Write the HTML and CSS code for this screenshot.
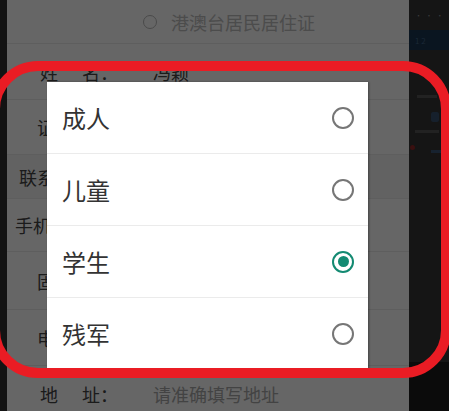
FILE: index.html
```html
<!DOCTYPE html>
<html lang="zh">
<head>
<meta charset="utf-8">
<title>乘客类型</title>
<link rel="stylesheet" href="styles.css">
</head>
<body>
<div class="screen">
  <div class="edge-left"></div>
  <div class="form">
    <div class="row idtype">
      <span class="small-radio"></span>
      <span class="idtype-text">港澳台居民居住证</span>
    </div>
    <div class="row r-name">
      <span class="label pad33">姓<i class="gap"></i>名：</span>
      <span class="value">冯颖</span>
    </div>
    <div class="row r-id">
      <span class="label pad30">证件号码：</span>
      <span class="placeholder">请输入证件号码</span>
    </div>
    <div class="section">联系人信息</div>
    <div class="row r-phone">
      <span class="label pad8">手机号码：</span>
      <span class="placeholder">请输入手机号码</span>
    </div>
    <div class="row r-tel">
      <span class="label pad30">固定电话：</span>
      <span class="placeholder">请输入固定电话</span>
    </div>
    <div class="row r-mail">
      <span class="label pad30">电子邮箱：</span>
      <span class="placeholder">请输入电子邮箱</span>
    </div>
    <div class="row r-addr">
      <span class="label pad33">地<i class="gap"></i>址：</span>
      <span class="placeholder">请准确填写地址</span>
    </div>
    <div class="dim"></div>
  </div>
  <div class="side">
    <div class="side-top"><span class="dots">• • •</span></div>
    <div class="side-band"><span class="band-text">1 2</span></div>
    <div class="side-body">
      <span class="side-line l1"></span>
      <span class="side-icon"></span>
      <span class="side-line l2"></span>
      <span class="side-dot"></span>
      <span class="side-line l3"></span>
    </div>
    <div class="side-bottom"></div>
  </div>
</div>

<div class="dialog">
  <div class="option"><span class="opt-text">成人</span><span class="radio"></span></div>
  <div class="option"><span class="opt-text">儿童</span><span class="radio"></span></div>
  <div class="option"><span class="opt-text">学生</span><span class="radio checked"></span></div>
  <div class="option"><span class="opt-text">残军</span><span class="radio"></span></div>
</div>

<div class="annotation"></div>
</body>
</html>
```

FILE: styles.css
```css
html, body {
  margin: 0;
  padding: 0;
}
body {
  width: 449px;
  height: 411px;
  overflow: hidden;
  background: #141414;
  font-family: "Noto Sans CJK SC", "Noto Sans", sans-serif;
  position: relative;
}
.screen {
  display: flex;
  height: 411px;
}
.edge-left {
  width: 7px;
  flex: none;
  background: #131313;
}
.form {
  width: 402px;
  flex: none;
  background: #ffffff;
  position: relative;
  overflow: hidden;
}
.row {
  display: flex;
  align-items: center;
  border-bottom: 1px solid #ececec;
  box-sizing: border-box;
  font-size: 18px;
  line-height: 1;
}
.idtype {
  height: 44px;
  padding-left: 136px;
  gap: 14px;
}
.small-radio {
  width: 14px;
  height: 14px;
  box-sizing: border-box;
  border: 1.5px solid #b8b8b8;
  border-radius: 50%;
}
.idtype-text {
  color: #bdbdbd;
  font-size: 18px;
}
.r-name { height: 56px; }
.r-id { height: 55px; }
.r-phone { height: 53px; }
.r-tel { height: 58px; }
.r-mail { height: 56px; }
.r-addr { height: 56px; border-bottom: none; }
.label {
  width: 146px;
  flex: none;
  box-sizing: border-box;
  color: #444444;
  white-space: nowrap;
}
.pad33 { padding-left: 33px; }
.pad30 { padding-left: 30px; }
.pad8 { padding-left: 8px; }
.gap {
  display: inline-block;
  width: 24px;
}
.value {
  color: #444444;
}
.placeholder {
  color: #a8a8a8;
}
.section {
  height: 44px;
  display: flex;
  align-items: center;
  padding-left: 12px;
  background: #f4f4f4;
  color: #444444;
  font-size: 18px;
  border-bottom: 1px solid #ececec;
  box-sizing: border-box;
}
.dim {
  position: absolute;
  inset: 0;
  background: rgba(0, 0, 0, 0.6);
}
.side {
  width: 40px;
  flex: none;
  display: flex;
  flex-direction: column;
  background: #151515;
}
.side-top {
  height: 30px;
  display: flex;
  align-items: center;
  padding-left: 6px;
}
.dots {
  color: #3c3c3c;
  font-size: 7px;
  letter-spacing: 1px;
}
.side-band {
  height: 20px;
  background: #0a1520;
  display: flex;
  align-items: center;
  padding-left: 6px;
}
.band-text {
  color: #1a2836;
  font-size: 8px;
}
.side-body {
  flex: 1;
  position: relative;
}
.side-line {
  position: absolute;
  height: 3px;
  background: #222222;
}
.l1 { left: 8px; top: 45px; width: 20px; }
.l2 { left: 6px; top: 80px; width: 24px; }
.l3 { left: 22px; top: 100px; width: 14px; background: #17222f; }
.side-icon {
  position: absolute;
  left: 22px;
  top: 62px;
  width: 8px;
  height: 10px;
  background: #16202c;
  border-radius: 2px;
}
.side-dot {
  position: absolute;
  left: 1px;
  top: 95px;
  width: 5px;
  height: 5px;
  background: #3a1010;
  border-radius: 50%;
}
.side-bottom {
  height: 49px;
  background: #0b0b0b;
}
.dialog {
  position: absolute;
  left: 47px;
  top: 82px;
  width: 321px;
  height: 288px;
  background: #ffffff;
  box-shadow: 1px 0 2px rgba(0, 0, 0, 0.35);
  display: flex;
  flex-direction: column;
}
.option {
  height: 72px;
  flex: none;
  display: flex;
  align-items: center;
  justify-content: space-between;
  padding: 0 14px 0 15px;
  box-sizing: border-box;
  border-bottom: 1px solid #ebebeb;
}
.option:last-child {
  border-bottom: none;
}
.opt-text {
  font-size: 24px;
  color: #333333;
  line-height: 1;
}
.radio {
  width: 22px;
  height: 22px;
  box-sizing: border-box;
  border: 2px solid #767676;
  border-radius: 50%;
  display: flex;
  align-items: center;
  justify-content: center;
}
.radio.checked {
  border-color: #138a72;
}
.radio.checked::after {
  content: "";
  width: 11px;
  height: 11px;
  border-radius: 50%;
  background: #138a72;
}
.annotation {
  position: absolute;
  left: -10px;
  top: 61px;
  width: 461px;
  height: 317px;
  box-sizing: border-box;
  border: 10px solid #ea1c24;
  border-radius: 48px;
}
```
